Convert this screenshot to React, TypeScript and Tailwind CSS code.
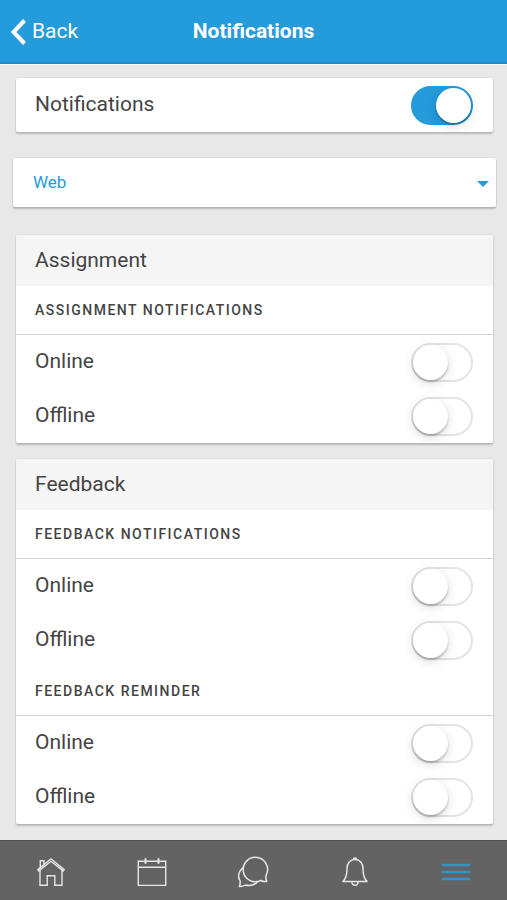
import { useId, useState } from "react";
import type { ReactNode } from "react";

interface SwitchRowProps {
  label: string;
  defaultChecked?: boolean;
}

interface NotificationGroup {
  title: string;
  options: string[];
}

interface NotificationSection {
  title: string;
  groups: NotificationGroup[];
}

const sections: NotificationSection[] = [
  {
    title: "Assignment",
    groups: [{ title: "Assignment notifications", options: ["Online", "Offline"] }],
  },
  {
    title: "Feedback",
    groups: [
      { title: "Feedback notifications", options: ["Online", "Offline"] },
      { title: "Feedback reminder", options: ["Online", "Offline"] },
    ],
  },
];

function Card({ children, className = "" }: { children: ReactNode; className?: string }) {
  return (
    <section
      className={`overflow-hidden rounded-[2px] bg-white shadow-[0_2px_2px_rgba(0,0,0,0.2),0_0_2px_rgba(0,0,0,0.12)] ${className}`}
    >
      {children}
    </section>
  );
}

function SwitchRow({ label, defaultChecked = false }: SwitchRowProps) {
  const id = useId();
  const [checked, setChecked] = useState(defaultChecked);

  return (
    <div className="flex h-[54px] items-center justify-between pr-5 pl-[19px]">
      <label htmlFor={id} className="text-[21px] text-[#444]">
        {label}
      </label>
      <input
        id={id}
        type="checkbox"
        role="switch"
        checked={checked}
        onChange={(e) => setChecked(e.target.checked)}
        className="flex h-[39px] w-[62px] cursor-pointer appearance-none items-center rounded-full border-2 border-[#e4e4e4] bg-white before:size-[35px] before:rounded-full before:bg-white before:shadow-[0_2px_2px_rgba(0,0,0,0.22),0_3px_12px_rgba(0,0,0,0.14)] before:transition-transform checked:border-[#249bdb] checked:bg-[#249bdb] checked:before:translate-x-[23px]"
      />
    </div>
  );
}

function HomeIcon() {
  return (
    <svg viewBox="0 0 30 30" className="size-[30px]" fill="none" stroke="currentColor" strokeWidth="1.4">
      <path d="M1.8 12.6 15 1.8l13.2 10.8-1 1.3L15 4.3 2.8 13.9z" />
      <path d="M4 12.9v15.4h7.2V18.8h7.6v9.5H26V12.9" />
      <path d="M4.3 10.5V3.8h3.6v3.8" />
    </svg>
  );
}

function CalendarIcon() {
  return (
    <svg viewBox="0 0 30 30" className="size-[30px]" fill="none" stroke="currentColor" strokeWidth="1.4">
      <path d="M1.3 4.2h27.4v24.2H1.3zM1.3 10.2h27.4" />
      <path d="M8.5 1.2v5.5M21.5 1.2v5.5" strokeWidth="2" />
    </svg>
  );
}

function ChatIcon() {
  return (
    <svg viewBox="0 0 32 32" className="size-8" fill="none" stroke="currentColor" strokeWidth="1.5" strokeLinejoin="round">
      <path d="M29.2 19.2a12.2 12.2 0 1 0-5.4 5.3c1.8 1 3.9 1.3 6 1-1-2-1.2-4-.6-6.3z" />
      <path d="M6.2 11.6c-4.8 3.6-5.8 9-3.2 13 .4 2 .2 4-.6 6 2.3.1 4.4-.4 6-1.6 5.2 1.2 10-.4 12.6-3.7" />
    </svg>
  );
}

function BellIcon() {
  return (
    <svg viewBox="0 0 30 30" className="size-[30px]" fill="none" stroke="currentColor" strokeWidth="1.5" strokeLinejoin="round">
      <path d="M15 2.6c-5.200 0-8 4-8 8.800 0 6-.5 9.600-4 13h24c-3.500-3.400-4-7-4-13 0-4.800-2.800-8.800-8-8.800z" />
      <path d="M13.400 2.600a1.600 1.600 0 0 1 3.200 0M11.800 24.600a3.200 3.600 0 0 0 6.400 0" />
    </svg>
  );
}

function MenuIcon() {
  return (
    <svg viewBox="0 0 30 30" className="size-[30px]" fill="none" stroke="currentColor" strokeWidth="2.4">
      <path d="M1 8h28M1 15h28M1 22h28" />
    </svg>
  );
}

const tabs = [
  { label: "Home", icon: HomeIcon },
  { label: "Calendar", icon: CalendarIcon },
  { label: "Messages", icon: ChatIcon },
  { label: "Alerts", icon: BellIcon },
  { label: "More", icon: MenuIcon, active: true },
];

export default function App() {
  return (
    <div className="flex min-h-screen flex-col bg-[#e8e8e8] font-['Roboto',sans-serif]">
      <header className="grid h-16 grid-cols-[1fr_auto_1fr] items-center border-b-2 border-[#1c8bc7] bg-[#249bdb] px-2.5 pt-0.5 text-white shadow-[0_1px_1px_rgba(255,255,255,0.7)]">
        <button className="flex items-center gap-1.5 text-[21px]">
          <svg viewBox="0 0 16 26" className="h-[26px] w-4" fill="none" stroke="currentColor" strokeWidth="4">
            <path d="M14.5 1.5 3.5 13l11 11.5" />
          </svg>
          Back
        </button>
        <h1 className="text-[21px] font-bold">Notifications</h1>
      </header>

      <main className="flex-1 pt-3.5 pr-3.5 pb-[15px] pl-4">
        <Card>
          <SwitchRow label="Notifications" defaultChecked />
        </Card>

        <Card className="relative -mx-[3px] mt-[26px] mb-7">
          <select
            aria-label="Channel"
            className="h-[49px] w-full cursor-pointer appearance-none px-5 text-[17px] text-[#249bdb]"
          >
            <option>Web</option>
          </select>
          <svg viewBox="0 0 12 6" className="pointer-events-none absolute top-[23px] right-[7px] h-1.5 w-3 text-[#249bdb]">
            <path d="M0 0h12L6 6z" fill="currentColor" />
          </svg>
        </Card>

        <div className="flex flex-col gap-4">
          {sections.map((section) => (
            <Card key={section.title}>
              <h2 className="bg-[#f5f5f5] px-[19px] text-[21px] leading-[51px] text-[#444]">{section.title}</h2>
              {section.groups.map((group) => (
                <div key={group.title}>
                  <h3 className="border-b border-[#d4d4d4] px-[19px] text-sm leading-[48px] font-medium tracking-[1.5px] text-[#444] uppercase">
                    {group.title}
                  </h3>
                  {group.options.map((option) => (
                    <SwitchRow key={option} label={option} />
                  ))}
                </div>
              ))}
            </Card>
          ))}
        </div>
      </main>

      <nav className="sticky bottom-0 grid h-[60px] grid-cols-5 border-t border-[#505050] bg-[#636363] pt-0.5 text-[#e6e6e6]">
        {tabs.map(({ label, icon: TabIcon, active }) => (
          <button
            key={label}
            aria-label={label}
            className={`flex items-center justify-center ${active ? "text-[#3494c8]" : ""}`}
          >
            <TabIcon />
          </button>
        ))}
      </nav>
    </div>
  );
}
